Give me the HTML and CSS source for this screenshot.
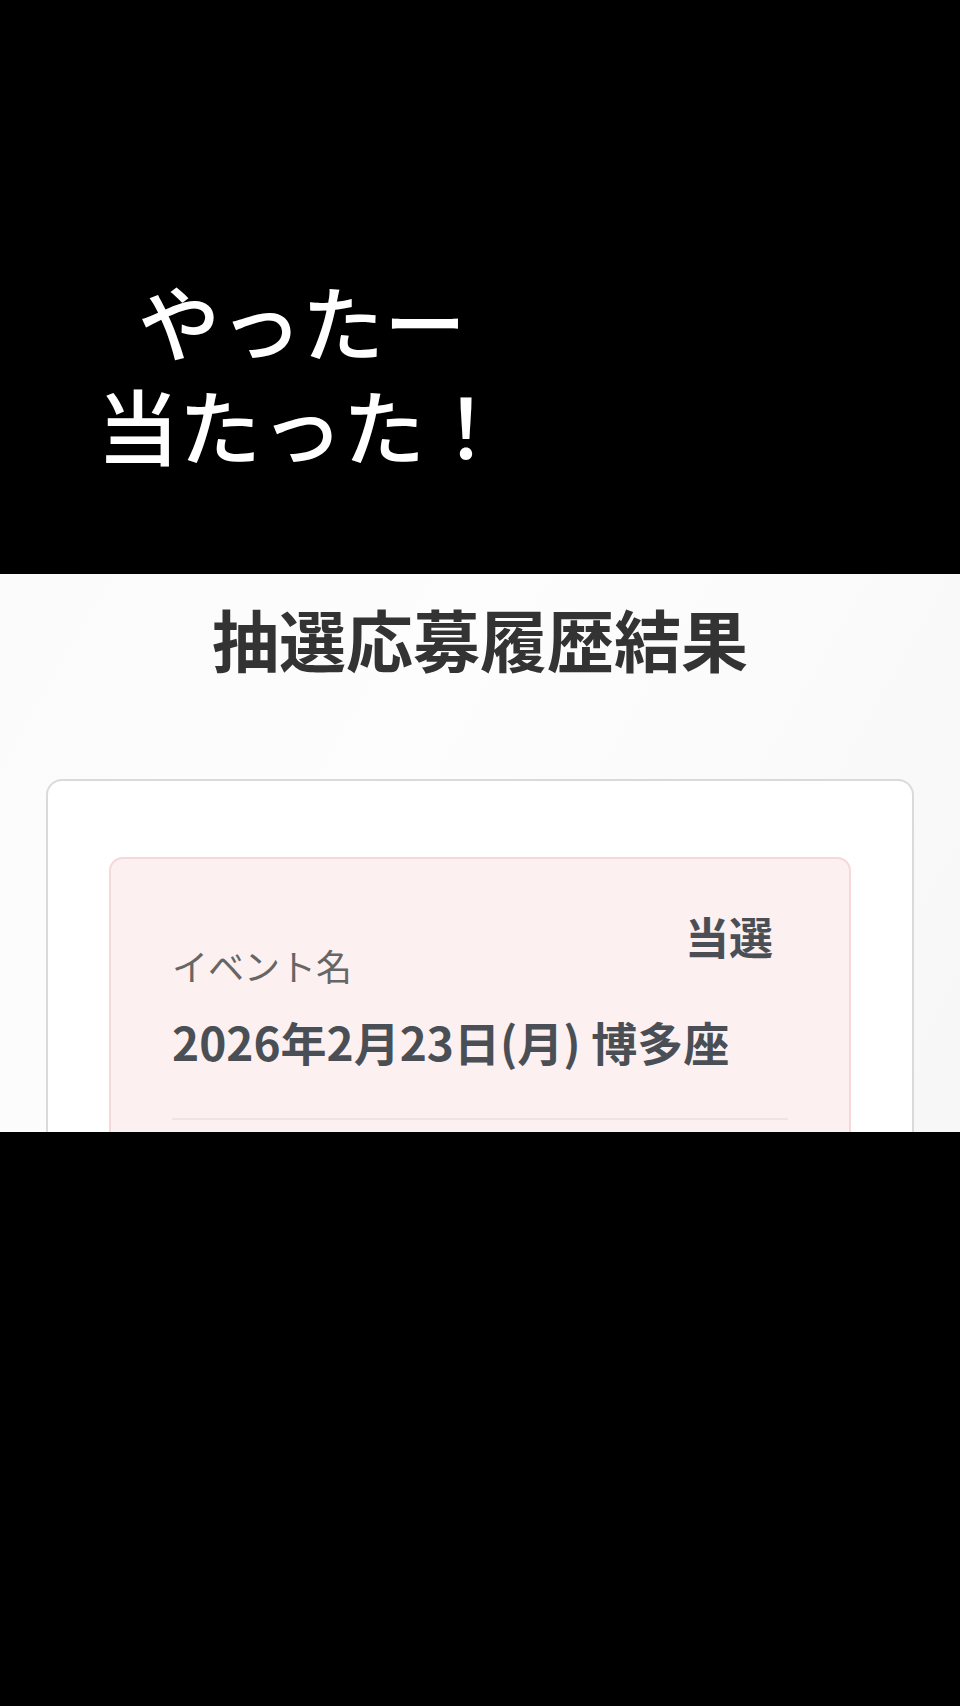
FILE: index.html
```html
<!DOCTYPE html>
<html lang="ja">
<head>
    <meta charset="utf-8">
    <title>抽選応募履歴結果</title>
    <link rel="stylesheet" href="styles.css">
</head>
<body>
    <div class="caption">
        <div class="caption-text">
            <div class="caption-line">やったー</div>
            <div class="caption-line">当たった！</div>
        </div>
    </div>
    <div class="screen">
        <h1 class="page-title">抽選応募履歴結果</h1>
        <div class="history-card">
            <div class="entry won">
                <div class="entry-head">
                    <div class="entry-label">イベント名</div>
                    <div class="entry-status">当選</div>
                </div>
                <div class="entry-value">2026年2月23日(月) 博多座</div>
                <div class="entry-divider"></div>
            </div>
        </div>
    </div>
    <div class="bottom-bar"></div>
</body>
</html>
```

FILE: styles.css
```css
body { margin: 0; background: #000; font-family: "Noto Sans CJK JP", sans-serif; }
.caption {
    height: 574px;
    box-sizing: border-box;
    padding: 268px 0 0 97px;
}
.caption-text {
    display: inline-block;
    text-align: center;
    color: #fff;
    font-size: 82px;
    font-weight: 500;
    line-height: 104px;
}
.screen {
    height: 558px;
    overflow: hidden;
    background: linear-gradient(120deg, #fbfbfb 0%, #fdfdfd 40%, #f7f7f8 100%);
    padding-top: 24px;
    box-sizing: border-box;
}
.page-title {
    margin: 0 0 102px;
    text-align: center;
    font-size: 67px;
    line-height: 79px;
    font-weight: 700;
    color: #333;
}
.history-card {
    margin: 0 46px;
    background: #fff;
    border: 2px solid #dadada;
    border-radius: 16px;
    padding: 76px 61px 40px;
}
.entry {
    background: #fdf0f0;
    border: 2px solid #f6d8db;
    border-radius: 14px;
    padding: 50px 61px 40px;
}
.entry-head {
    display: flex;
    justify-content: space-between;
    align-items: flex-start;
}
.entry-label {
    margin-top: 31px;
    font-size: 36px;
    line-height: 50px;
    color: #666;
}
.entry-status {
    margin-right: 15px;
    font-size: 44px;
    line-height: 55px;
    font-weight: 700;
    color: #4a4f56;
}
.entry-value {
    margin-top: 22px;
    font-size: 46px;
    line-height: 58px;
    font-weight: 700;
    color: #4a4f56;
}
.entry-divider {
    margin-top: 48px;
    height: 2px;
    background: #efe3e3;
}
.bottom-bar { height: 574px; background: #000; }
```
